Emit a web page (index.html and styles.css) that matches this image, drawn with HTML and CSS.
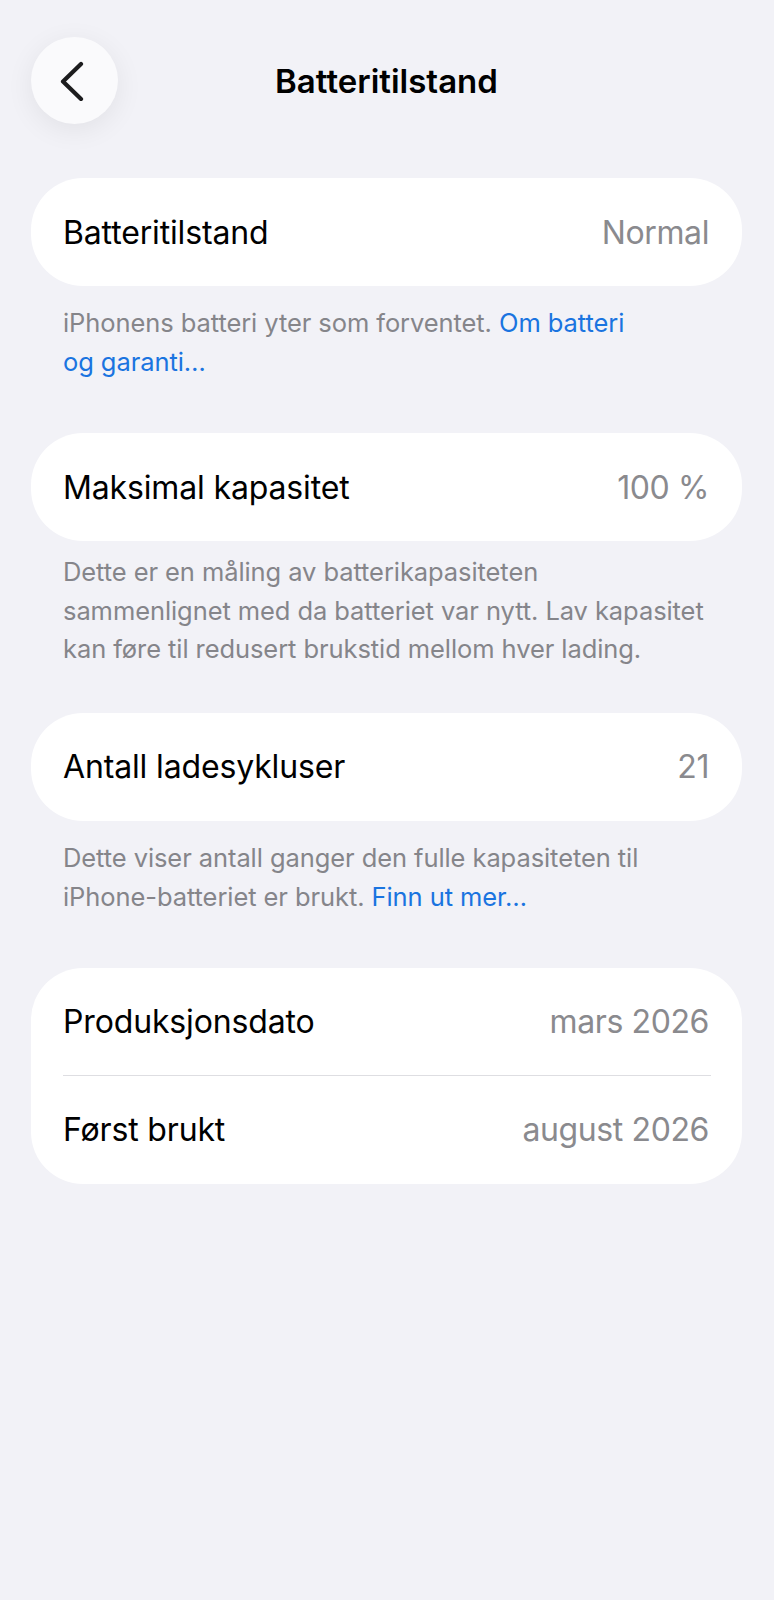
FILE: index.html
```html
<!DOCTYPE html>
<html lang="nb">
<head>
<meta charset="utf-8">
<title>Batteritilstand</title>
<link rel="stylesheet" href="styles.css">
</head>
<body>
<div class="page">
  <header class="nav">
    <button class="back" aria-label="Tilbake">
      <svg width="30" height="40" viewBox="0 0 30 40" aria-hidden="true">
        <path d="M23 3 L5 20.5 L23 38" fill="none" stroke="#1c1c1e" stroke-width="4.2" stroke-linecap="round" stroke-linejoin="round"/>
      </svg>
    </button>
    <h1 class="nav-title">Batteritilstand</h1>
    <span class="nav-spacer"></span>
  </header>

  <section class="group">
    <div class="card">
      <div class="row"><span class="label">Batteritilstand</span><span class="value">Normal</span></div>
    </div>
    <p class="footer">iPhonens batteri yter som forventet. <a class="link" href="#">Om batteri<br>og garanti…</a></p>
  </section>

  <section class="group">
    <div class="card">
      <div class="row"><span class="label">Maksimal kapasitet</span><span class="value">100 %</span></div>
    </div>
    <p class="footer footer-tight">Dette er en måling av batterikapasiteten<br>sammenlignet med da batteriet var nytt. Lav kapasitet<br>kan føre til redusert brukstid mellom hver lading.</p>
  </section>

  <section class="group">
    <div class="card">
      <div class="row"><span class="label">Antall ladesykluser</span><span class="value">21</span></div>
    </div>
    <p class="footer">Dette viser antall ganger den fulle kapasiteten til<br>iPhone-batteriet er brukt. <a class="link" href="#">Finn ut mer…</a></p>
  </section>

  <section class="group">
    <div class="card">
      <div class="row row-split"><span class="label">Produksjonsdato</span><span class="value">mars 2026</span></div>
      <div class="row"><span class="label">Først brukt</span><span class="value">august 2026</span></div>
    </div>
  </section>
</div>
</body>
</html>
```

FILE: styles.css
```css
* { box-sizing: border-box; }

html, body {
  margin: 0;
  padding: 0;
  background: #f2f2f7;
}

body {
  font-family: Inter, "Noto Sans", "Liberation Sans", sans-serif;
  color: #000;
  -webkit-font-smoothing: antialiased;
}

.page {
  padding: 37px 32px 0 31px;
  min-height: 1600px;
}

.nav {
  display: grid;
  grid-template-columns: 87px 1fr 87px;
  align-items: center;
  height: 87px;
  margin-bottom: 54px;
}

.back {
  width: 87px;
  height: 87px;
  border-radius: 50%;
  border: none;
  padding: 0 4px 0 0;
  background: #fafafc;
  box-shadow: 0 6px 28px rgba(0, 0, 0, 0.07);
  display: flex;
  align-items: center;
  justify-content: center;
}

.back svg { display: block; }

.nav-title {
  margin: 0;
  text-align: center;
  font-size: 33px;
  font-weight: 600;
  letter-spacing: 0;
}

.group { margin: 0; }

.card {
  background: #fff;
  border-radius: 52px;
  overflow: hidden;
}

.row {
  height: 108px;
  display: flex;
  align-items: center;
  justify-content: space-between;
  padding: 0 33px 0 32px;
  font-size: 32px;
  position: relative;
}

.label {
  color: #000;
  letter-spacing: -0.15px;
}

.value {
  color: #8a8a8e;
  letter-spacing: -0.4px;
}

.row-split { height: 107px; }

.row-split::after {
  content: "";
  position: absolute;
  left: 32px;
  right: 31px;
  bottom: -1px;
  height: 1px;
  background: #dedee2;
}

.row-split + .row { margin-top: 1px; }

.footer {
  margin: 0;
  padding: 17px 0 52px 32px;
  font-size: 25.5px;
  line-height: 39px;
  color: #85858a;
  white-space: nowrap;
  letter-spacing: -0.08px;
}

.footer-tight {
  padding-top: 12px;
  padding-bottom: 44px;
  line-height: 38.5px;
}

.link {
  color: #1a74e0;
  text-decoration: none;
}
```
